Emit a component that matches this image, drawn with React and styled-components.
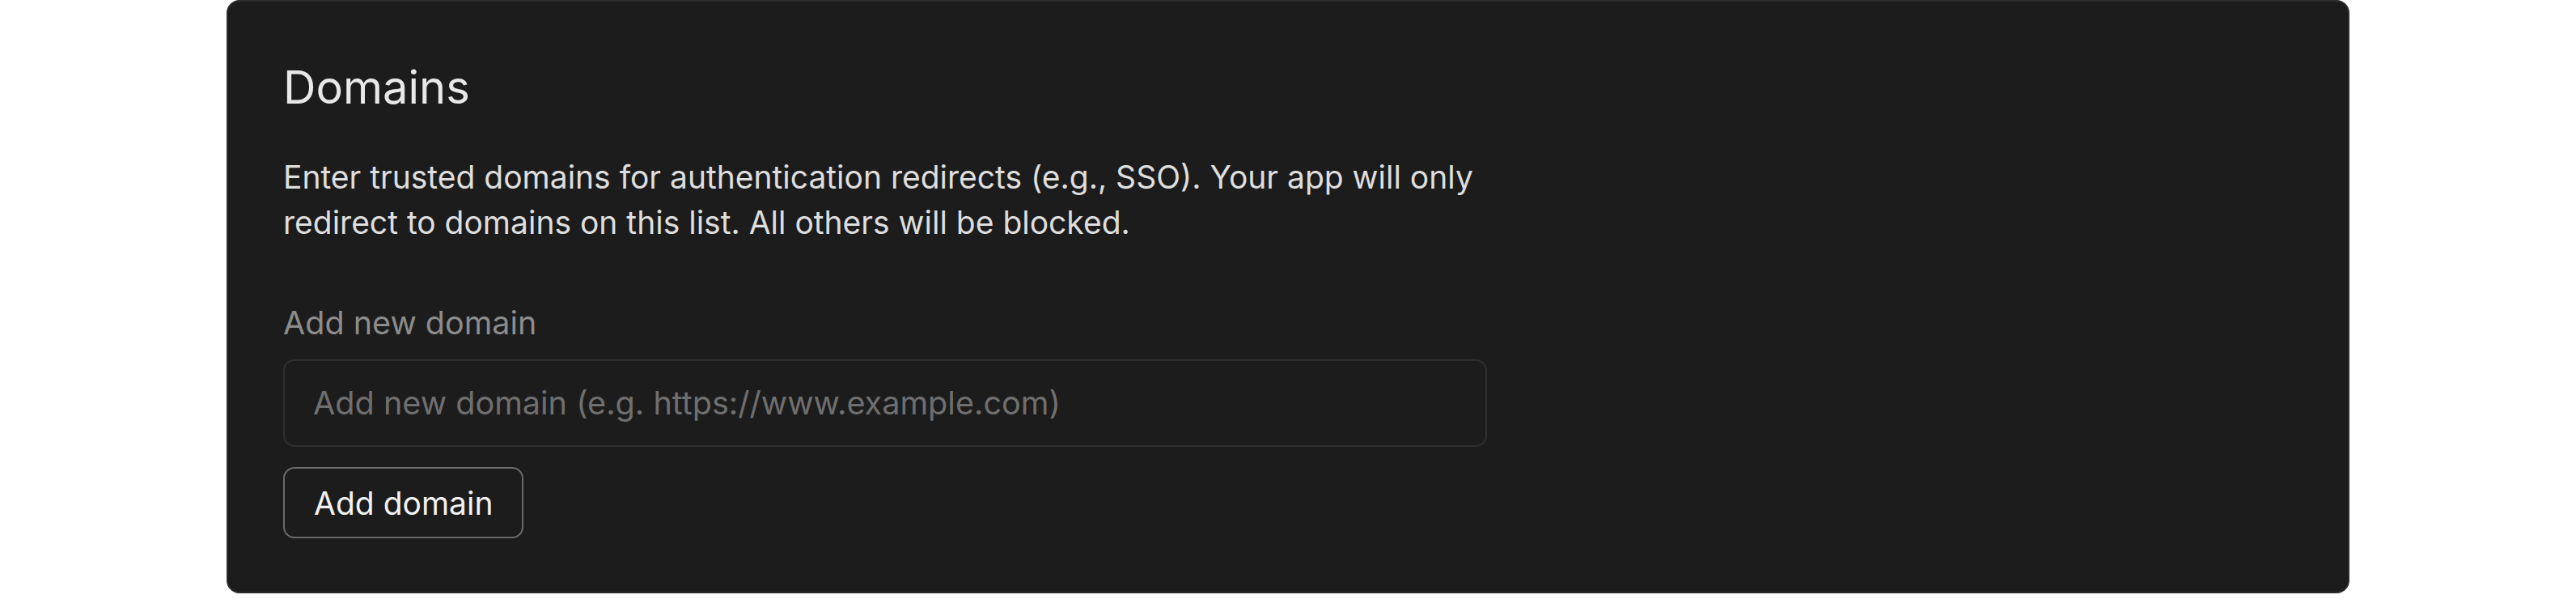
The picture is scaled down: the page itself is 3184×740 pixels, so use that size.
import React from 'react'
import styled, { createGlobalStyle } from 'styled-components'

const GlobalStyle = createGlobalStyle`
  html, body {
    margin: 0;
    padding: 0;
    background: #ffffff;
  }
  body {
    font-family: Inter, "Noto Sans", sans-serif;
    -webkit-font-smoothing: antialiased;
  }
`;

const Page = styled.div`
  padding: 0 280px;
`;

const Card = styled.section`
  background: #1c1c1c;
  border: 2px solid #2c2c2c;
  border-radius: 16px;
  padding: 72px 68px 66px;
  color: #e6e6e6;
`;

const Title = styled.h2`
  margin: 0;
  font-size: 56px;
  font-weight: 400;
  line-height: 68px;
  color: #e8e8e8;
`;

const Desc = styled.p`
  margin: 49px 0 0;
  max-width: 1488px;
  font-size: 39px;
  line-height: 56px;
  color: #dedede;
`;

const Field = styled.div`
  display: flex;
  flex-direction: column;
  align-items: flex-start;
  max-width: 1488px;
  margin-top: 68px;
`;

const Label = styled.label`
  font-size: 39.5px;
  line-height: 56px;
  color: #8c8c8c;
`;

const Input = styled.input`
  box-sizing: border-box;
  width: 100%;
  height: 108px;
  margin-top: 17px;
  padding: 0 35px;
  background: transparent;
  border: 2px solid #2f2f2f;
  border-radius: 14px;
  font-family: inherit;
  font-size: 39.6px;
  color: #e6e6e6;
  outline: none;
  &::placeholder {
    color: #6f6f6f;
  }
`;

const Button = styled.button`
  box-sizing: border-box;
  height: 88px;
  margin-top: 25px;
  padding: 0 36px;
  background: transparent;
  border: 2px solid #6a6a6a;
  border-radius: 14px;
  font-family: inherit;
  font-size: 39px;
  color: #f2f2f2;
  cursor: pointer;
`;

const App = () => {
  return (
    <Page>
      <GlobalStyle />
      <Card>
        <Title>Domains</Title>
        <Desc>
          Enter trusted domains for authentication redirects (e.g., SSO). Your app will only
          redirect to domains on this list. All others will be blocked.
        </Desc>
        <Field>
          <Label htmlFor="new-domain">Add new domain</Label>
          <Input id="new-domain" placeholder="Add new domain (e.g. https://www.example.com)" />
          <Button>Add domain</Button>
        </Field>
      </Card>
    </Page>
  )
}

export default App
